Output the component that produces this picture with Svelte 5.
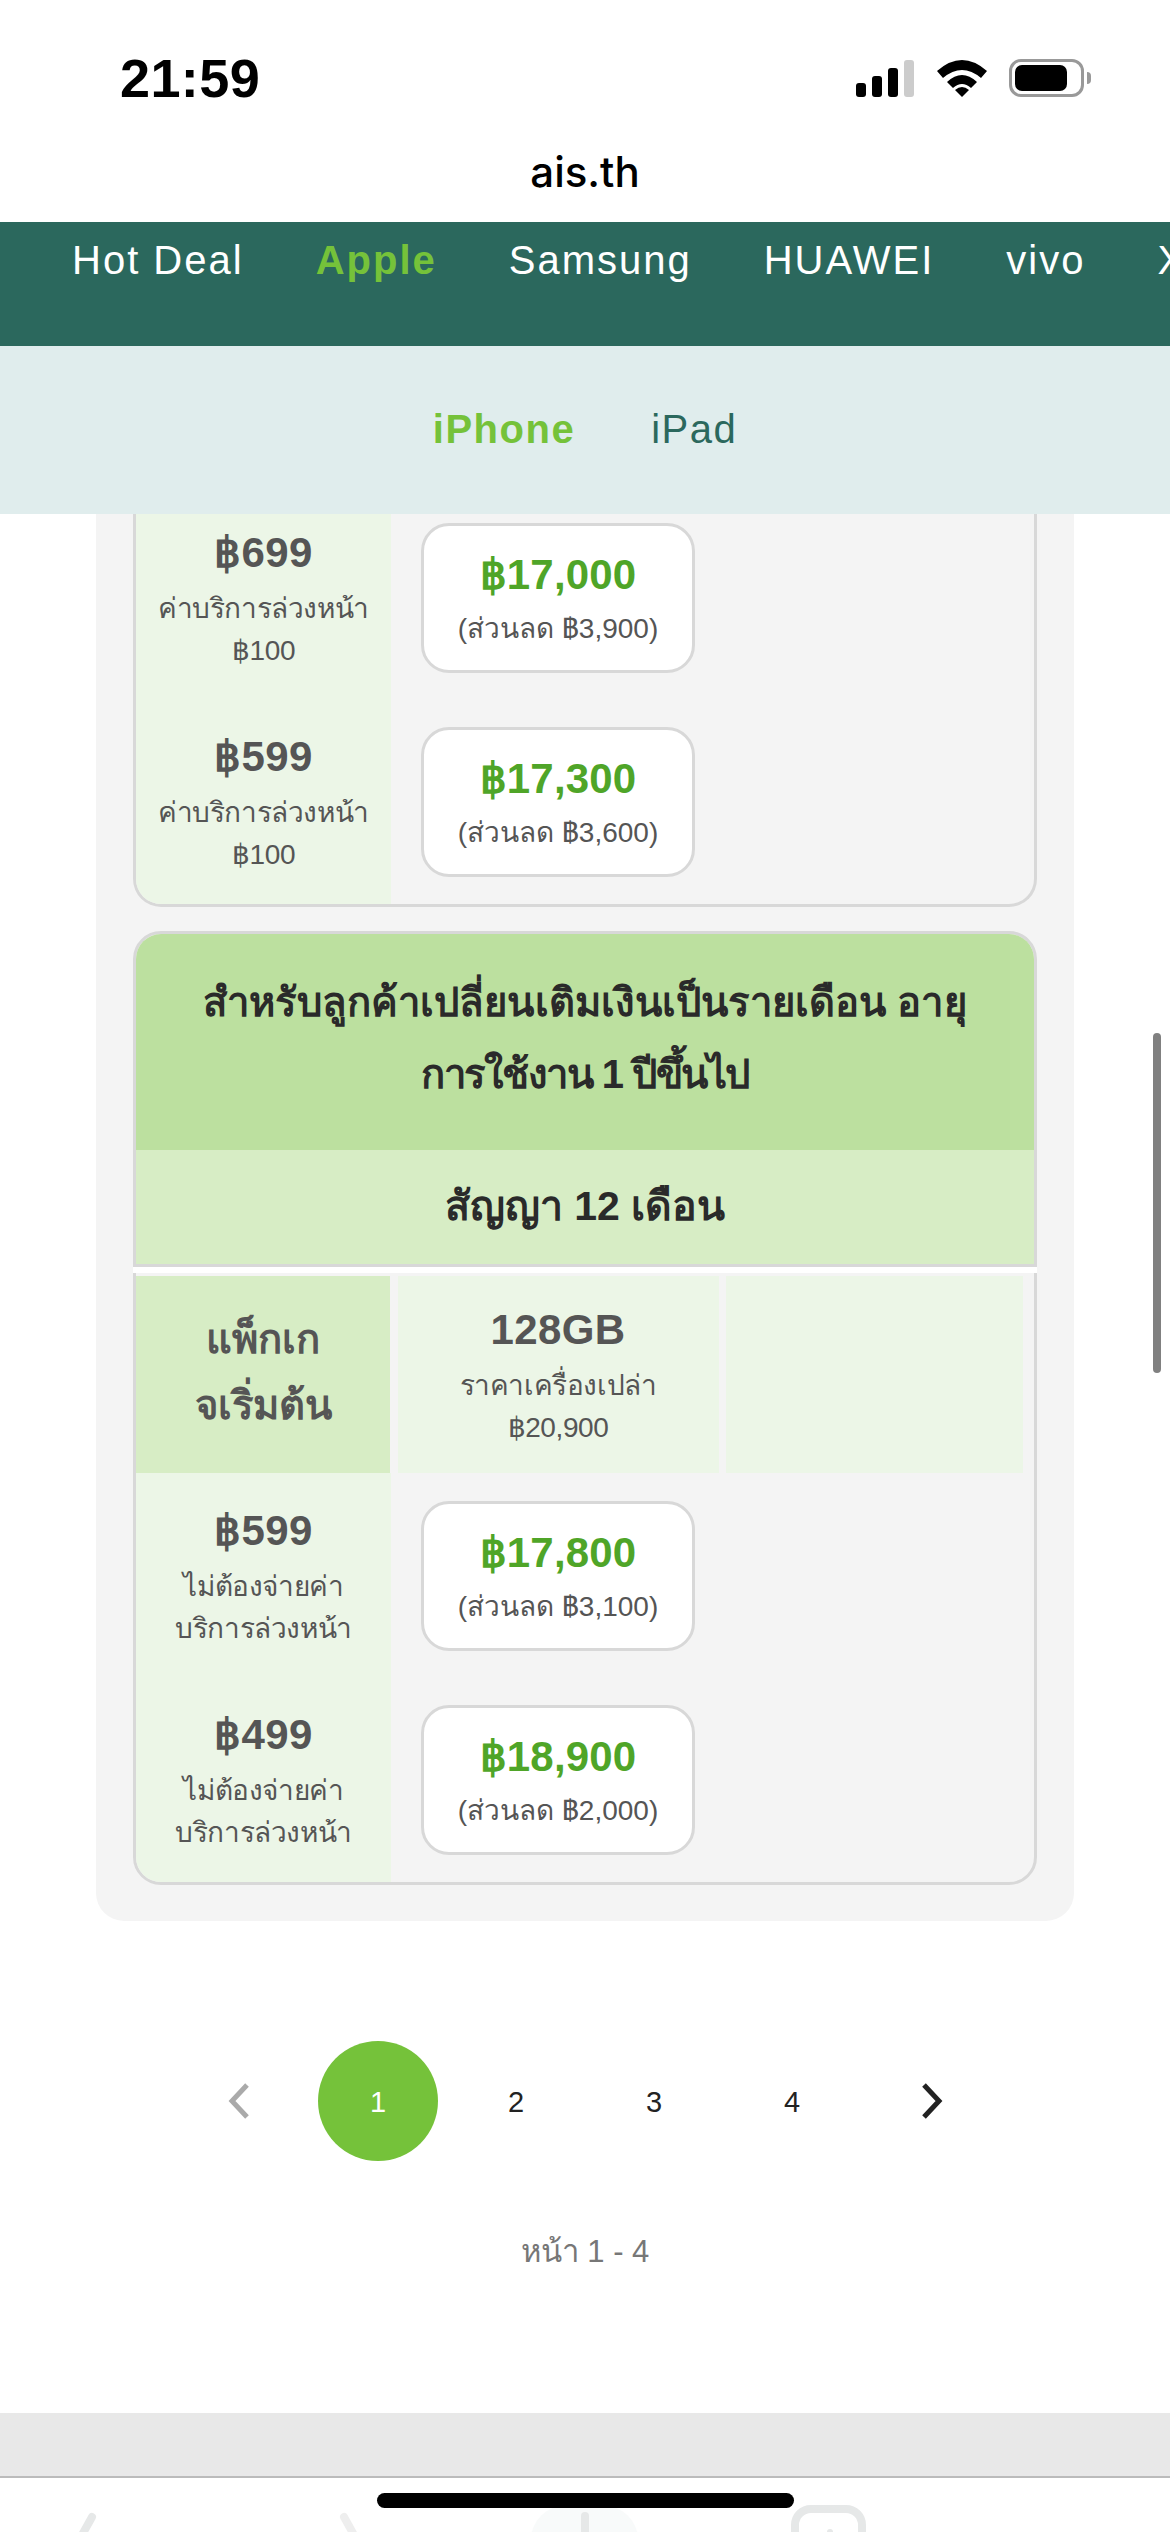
<script>
	const brands = ['Hot Deal', 'Apple', 'Samsung', 'HUAWEI', 'vivo', 'Xiaomi'];

	const firstRows = [
		{ pack: '฿699', note: ['ค่าบริการล่วงหน้า', '฿100'], price: '฿17,000', off: '(ส่วนลด ฿3,900)' },
		{ pack: '฿599', note: ['ค่าบริการล่วงหน้า', '฿100'], price: '฿17,300', off: '(ส่วนลด ฿3,600)' }
	];
	const secondRows = [
		{ pack: '฿599', note: ['ไม่ต้องจ่ายค่า', 'บริการล่วงหน้า'], price: '฿17,800', off: '(ส่วนลด ฿3,100)' },
		{ pack: '฿499', note: ['ไม่ต้องจ่ายค่า', 'บริการล่วงหน้า'], price: '฿18,900', off: '(ส่วนลด ฿2,000)' }
	];
</script>

{#snippet priceRow(row)}
	<div class="row">
		<div class="pack">
			<div class="pack-price">{row.pack}</div>
			<div class="notes">
				{#each row.note as line}
					<div class="note">{line}</div>
				{/each}
			</div>
		</div>
		<div class="deal">
			<div class="deal-price">{row.price}</div>
			<div class="deal-off">{row.off}</div>
		</div>
	</div>
{/snippet}

<div class="page">
	<header class="status">
		<div class="status-top">
			<span class="time">21:59</span>
			<div class="status-icons">
				<div class="signal">
					<i class="b1"></i><i class="b2"></i><i class="b3"></i><i class="b4"></i>
				</div>
				<svg class="wifi" width="50" height="38" viewBox="0 0 50 38">
					<path d="M0 12 Q25 -10 50 12 L44 19 Q25 3 6 19 Z" fill="#000" />
					<path d="M10 23 Q25 9 40 23 L34 29 Q25 21 16 29 Z" fill="#000" />
					<path d="M18 31 Q25 25 32 31 L25 38 Z" fill="#000" />
				</svg>
				<div class="battery"><span></span></div>
				<div class="nub"></div>
			</div>
		</div>
		<div class="url">ais.th</div>
	</header>

	<nav class="brands">
		{#each brands as brand}
			<span class:active={brand === 'Apple'}>{brand}</span>
		{/each}
	</nav>

	<nav class="models">
		<span class="active">iPhone</span>
		<span>iPad</span>
	</nav>

	<main class="panel">
		<section class="card card-first">
			{#each firstRows as row}
				{@render priceRow(row)}
			{/each}
		</section>

		<section class="card card-second">
			<h2 class="card-title">
				<span class="line-one">สำหรับลูกค้าเปลี่ยนเติมเงินเป็นรายเดือน อายุ</span>
				<span class="line-two">การใช้งาน 1 ปีขึ้นไป</span>
			</h2>
			<h3 class="contract">สัญญา 12 เดือน</h3>
			<div class="stripe"></div>
			<div class="head-row">
				<div class="head-pack">แพ็กเก<br />จเริ่มต้น</div>
				<div class="head-cell">
					<div class="head-size">128GB</div>
					<div class="notes">
						<div class="note">ราคาเครื่องเปล่า</div>
						<div class="note">฿20,900</div>
					</div>
				</div>
				<div class="head-cell"></div>
			</div>
			<div class="rows">
				{#each secondRows as row}
					{@render priceRow(row)}
				{/each}
			</div>
		</section>
	</main>

	<div class="pager">
		<svg width="24" height="36" viewBox="0 0 24 36">
			<path d="M20 2 L5 18 L20 34" fill="none" stroke="#aaa" stroke-width="5" />
		</svg>
		<span class="pg current">1</span>
		<span class="pg">2</span>
		<span class="pg">3</span>
		<span class="pg">4</span>
		<svg width="24" height="36" viewBox="0 0 24 36">
			<path d="M4 2 L19 18 L4 34" fill="none" stroke="#222" stroke-width="5" />
		</svg>
	</div>
	<div class="pages-label">หน้า 1 - 4</div>

	<div class="footer-band"></div>

	<div class="toolbar">
		<svg width="1170" height="54" viewBox="0 0 1170 54">
			<path d="M92 39 L72 75" fill="none" stroke="#e6e8e8" stroke-width="8" stroke-linecap="round" />
			<path d="M344 39 L364 75" fill="none" stroke="#eeeeee" stroke-width="8" stroke-linecap="round" />
			<rect x="531" y="27" width="107" height="70" rx="36" fill="#f8fafa" />
			<path d="M585 38 V70" fill="none" stroke="#e6e8e8" stroke-width="8" stroke-linecap="round" />
			<rect x="795" y="31" width="67" height="68" rx="16" fill="none" stroke="#e6e8e8" stroke-width="8" />
			<circle cx="830" cy="54" r="3" fill="#e6e8e8" />
		</svg>
		<div class="home"></div>
	</div>

	<div class="scrollbar"></div>
</div>

<style>
	:global(body) {
		margin: 0;
		background: #fff;
	}

	.page {
		position: relative;
		width: 1170px;
		height: 2532px;
		overflow: hidden;
		background: #fff;
		font-family: 'Liberation Sans', 'Noto Sans', sans-serif;
		color: #555;
	}

	.status {
		height: 222px;
		background: #fff;
	}

	.status-top {
		display: flex;
		justify-content: space-between;
		align-items: center;
		height: 38px;
		padding: 59px 79px 0 120px;
	}

	.time {
		font-size: 54px;
		font-weight: bold;
		letter-spacing: 0.4px;
		color: #000;
	}

	.status-icons {
		display: flex;
		align-items: center;
		height: 38px;
	}

	.signal {
		display: flex;
		align-items: flex-end;
		gap: 6px;
		height: 37px;
		margin-right: 23px;
	}

	.signal i {
		display: block;
		width: 10px;
		border-radius: 3px;
		background: #000;
	}

	.b1 { height: 14px; }
	.b2 { height: 21px; }
	.b3 { height: 29px; }
	.signal .b4 { height: 37px; background: #ccc; }

	.wifi {
		margin-right: 22px;
	}

	.battery {
		box-sizing: border-box;
		width: 75px;
		height: 38px;
		padding: 3px;
		border: 3px solid #999;
		border-radius: 12px;
	}

	.battery span {
		display: block;
		width: 52px;
		height: 26px;
		border-radius: 7px;
		background: #000;
	}

	.nub {
		width: 4px;
		height: 12px;
		margin-left: 3px;
		border-radius: 0 4px 4px 0;
		background: #999;
	}

	.url {
		margin-top: 50px;
		text-align: center;
		font-family: Inter, sans-serif;
		font-size: 42px;
		font-weight: 500;
		line-height: 50px;
		color: #000;
	}

	.brands {
		display: flex;
		gap: 72px;
		box-sizing: border-box;
		height: 124px;
		padding: 14px 0 0 72px;
		overflow: hidden;
		white-space: nowrap;
		background: #2b685d;
		font-size: 40px;
		line-height: 48px;
		letter-spacing: 2px;
		color: #fff;
	}

	.brands .active {
		font-weight: bold;
		color: #75c23a;
	}

	.models {
		position: relative;
		z-index: 1;
		display: flex;
		justify-content: center;
		align-items: center;
		gap: 76px;
		box-sizing: border-box;
		height: 168px;
		padding-bottom: 2px;
		background: #e0eded;
		font-size: 40px;
		letter-spacing: 1.5px;
		color: #2b685d;
	}

	.models .active {
		font-weight: bold;
		color: #75c23a;
	}

	/* scrolled: the first card starts under the sub nav */
	.panel {
		box-sizing: border-box;
		width: 978px;
		height: 1425px;
		margin: -18px 0 0 96px;
		padding: 0 37px;
		border-radius: 0 0 28px 28px;
		background: #f4f4f4;
	}

	.card {
		box-sizing: border-box;
		width: 904px;
		border: 3px solid #d8d8d8;
		border-radius: 28px;
		overflow: hidden;
	}

	.card-first {
		border-top: 0;
		border-radius: 0 0 28px 28px;
	}

	.card-second {
		margin-top: 24px;
		overflow: visible;
	}

	.row {
		display: grid;
		grid-template-columns: 255px 1fr;
		height: 204px;
	}

	.pack {
		box-sizing: border-box;
		padding-top: 28px;
		background: #ecf6e7;
		text-align: center;
	}

	.pack-price,
	.head-size {
		font-size: 42px;
		font-weight: bold;
		line-height: 58px;
		letter-spacing: 0.4px;
		color: #555;
	}

	.notes {
		margin-top: 6px;
	}

	.note {
		font-size: 28px;
		line-height: 42px;
		letter-spacing: -0.4px;
		color: #555;
	}

	.deal {
		box-sizing: border-box;
		width: 274px;
		height: 150px;
		margin: 27px 0 0 30px;
		padding-top: 22px;
		border: 3px solid #d8d8d8;
		border-radius: 28px;
		background: #fff;
		text-align: center;
	}

	.deal-price {
		font-size: 42px;
		font-weight: bold;
		line-height: 54px;
		letter-spacing: 0.2px;
		color: #4fa528;
	}

	.deal-off {
		margin-top: 4px;
		font-size: 28px;
		line-height: 46px;
		color: #555;
	}

	.card-title {
		box-sizing: border-box;
		height: 216px;
		margin: 0;
		padding-top: 32px;
		border-radius: 25px 25px 0 0;
		background: #bce09f;
		text-align: center;
		font-size: 40px;
		font-weight: bold;
		line-height: 72px;
		color: #2a2a2a;
	}

	.card-title span {
		display: block;
		white-space: nowrap;
	}

	.line-one {
		letter-spacing: 0.1px;
	}

	.line-two {
		letter-spacing: -1.5px;
	}

	.contract {
		height: 114px;
		margin: 0;
		border-bottom: 3px solid #d8d8d8;
		background: #d7edc5;
		text-align: center;
		font-size: 41px;
		font-weight: bold;
		line-height: 112px;
		color: #2a2a2a;
	}

	.stripe {
		height: 6px;
		margin: 0 -3px 3px;
		background: #fff;
	}

	.head-row {
		display: grid;
		grid-template-columns: 254px 321px 297px;
		column-gap: 7.5px;
		height: 197px;
	}

	.head-pack {
		display: flex;
		align-items: center;
		justify-content: center;
		padding-bottom: 6px;
		background: #d7edc5;
		text-align: center;
		font-size: 40px;
		font-weight: bold;
		line-height: 66px;
		color: #555;
	}

	.head-cell {
		padding-top: 25px;
		background: #ecf6e7;
		text-align: center;
	}

	.rows .row:first-child {
		height: 205px;
	}

	.rows .row:first-child .pack {
		padding-top: 29px;
	}

	.rows .row:first-child .deal {
		margin-top: 28px;
	}

	.rows .row:last-child .pack {
		border-radius: 0 0 0 25px;
	}

	.pager {
		display: flex;
		align-items: center;
		height: 120px;
		margin-top: 120px;
		padding-left: 227px;
	}

	.pager svg:first-child {
		margin-right: 67px;
	}

	.pager svg:last-child {
		margin-left: 68px;
	}

	.pg {
		width: 120px;
		height: 120px;
		margin-right: 18px;
		border-radius: 50%;
		text-align: center;
		font-size: 29px;
		line-height: 122px;
		color: #222;
	}

	.pg.current {
		background: #75c23a;
		color: #fff;
	}

	.pg:nth-child(5) {
		margin-right: 0;
	}

	.pages-label {
		margin-top: 69px;
		text-align: center;
		font-size: 31px;
		line-height: 44px;
		color: #777;
	}

	.footer-band {
		height: 63px;
		margin-top: 139px;
		border-bottom: 2px solid #bbb;
		background: #e8e8e8;
	}

	.toolbar {
		position: relative;
		height: 54px;
		overflow: hidden;
		background: #fff;
	}

	.toolbar svg {
		display: block;
	}

	.home {
		position: absolute;
		left: 377px;
		top: 15px;
		width: 417px;
		height: 15px;
		border-radius: 8px;
		background: #000;
	}

	.scrollbar {
		position: absolute;
		left: 1153px;
		top: 1033px;
		width: 8px;
		height: 340px;
		border-radius: 4px;
		background: #808080;
	}
</style>
